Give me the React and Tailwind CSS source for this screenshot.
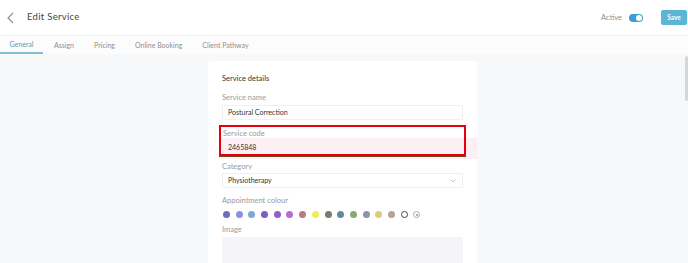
import React from 'react';

const swatches = [
  '#6b6fb8', '#8a90e6', '#7ca8da', '#7a5ec2', '#9160c2', '#b56dd2', '#b37c88',
  '#eeee5c', '#7e7a70', '#5f8ba2', '#86aa72', '#8b96aa', '#d9cf7a', '#b3a493',
];

const tabs = ['General', 'Assign', 'Pricing', 'Online Booking', 'Client Pathway'];

const Field = ({ label, children }) => (
  <div className="flex flex-col">
    <span className="text-[7.5px] leading-[10px] text-[#9a9a9a]">{label}</span>
    {children}
  </div>
);

const App = () => {
  return (
    <div className="w-[688px] h-[263px] overflow-hidden bg-[#f7f8fa] text-[#333] font-['Lato','Open_Sans',sans-serif] flex flex-col">
      {/* Header */}
      <div className="h-[35px] bg-white flex items-center shrink-0">
        <svg width="10" height="12" viewBox="0 0 10 12" className="ml-[6px]">
          <path d="M7 1 L2 6 L7 11" fill="none" stroke="#8a8a8a" strokeWidth="1.1" />
        </svg>
        <span className="ml-[11px] text-[9.5px] text-[#444] tracking-[0.3px]">Edit Service</span>
        <div className="ml-auto flex items-center">
          <span className="text-[7.5px] text-[#8c8c8c]">Active</span>
          <div className="ml-[7px] w-[14px] h-[8px] rounded-full bg-[#3a9fd0] flex items-center justify-end pr-[1px]">
            <div className="w-[6px] h-[6px] rounded-full bg-white" />
          </div>
          <div className="ml-[18px] mr-[1px] w-[26px] h-[15px] rounded-[2px] bg-[#5ab5d6] text-white text-[6.5px] font-bold flex items-center justify-center">
            Save
          </div>
        </div>
      </div>

      {/* Tabs */}
      <div className="h-[19px] bg-[#fcfcfd] flex items-stretch shrink-0 border-t border-[#f1f2f4]">
        {tabs.map((t, i) => (
          <div
            key={t}
            className={
              i === 0
                ? 'w-[43px] mr-[1px] flex items-center justify-center text-[7px] text-[#4ba4b6] border-b-2 border-[#7cc3cf]'
                : 'px-[10px] flex items-center text-[7px] text-[#8e8e8e]'
            }
          >
            {t}
          </div>
        ))}
      </div>

      {/* Body */}
      <div className="flex-1 flex relative">
        <div className="flex-1 flex justify-center pt-[7px]">
          <div className="w-[269px] bg-white rounded-[3px] px-[14px] pt-[13px] flex flex-col">
            <span className="text-[7.5px] text-[#333] leading-[10px]">Service details</span>

            <div className="mt-[9px]">
              <Field label="Service name">
                <div className="mt-[2px] h-[15px] border border-[#f0f0f2] flex items-center pl-[5px] text-[7px] text-[#333]">
                  Postural Correction
                </div>
              </Field>
            </div>

            {/* Highlighted field */}
            <div className="relative mt-[5px] -mx-[3px]">
              <div className="absolute left-0 right-[-11px] top-[13px] h-[21px] bg-[#fdf0f5]" />
              <div className="relative border-2 border-solid border-red-600 shadow-[0_1px_0_#6b4a22] px-[2px] pt-[2px]">
                <Field label="Service code">
                  <div className="mt-[1px] h-[14px] flex items-center pl-[5px] text-[7px] text-[#333]">
                    2465848
                  </div>
                </Field>
              </div>
            </div>

            <div className="mt-[6px]">
              <Field label="Category">
                <div className="mt-[1px] h-[15px] border border-[#f0f0f2] flex items-center justify-between pl-[5px] pr-[6px] text-[7px] text-[#333]">
                  Physiotherapy
                  <svg width="6" height="4" viewBox="0 0 6 4">
                    <path d="M0.5 0.5 L3 3 L5.5 0.5" fill="none" stroke="#b5b5b5" strokeWidth="0.8" />
                  </svg>
                </div>
              </Field>
            </div>

            <div className="mt-[8px]">
              <Field label="Appointment colour">
                <div className="mt-[5px] flex items-center gap-[5.7px] pl-[1px]">
                  {swatches.map((c) => (
                    <div key={c} className="w-[7px] h-[7px] rounded-full" style={{ backgroundColor: c }} />
                  ))}
                  <div className="w-[7px] h-[7px] rounded-full border border-[#444]" />
                  <div className="w-[7px] h-[7px] rounded-full border border-[#aaa] flex items-center justify-center">
                    <span className="w-[2px] h-[2px] rounded-full bg-[#999]" />
                  </div>
                </div>
              </Field>
            </div>

            <div className="mt-[7px]">
              <Field label="Image">
                <div className="mt-[2px] h-[40px] bg-[#f5f5f7]" />
              </Field>
            </div>
          </div>
        </div>
        {/* scrollbar */}
        <div className="w-[3px] bg-[#f7f8fa] flex flex-col">
          <div className="h-[45px] mt-[2px] bg-[#d6d6d8] rounded-full" />
        </div>
      </div>
    </div>
  );
};

export default App;
